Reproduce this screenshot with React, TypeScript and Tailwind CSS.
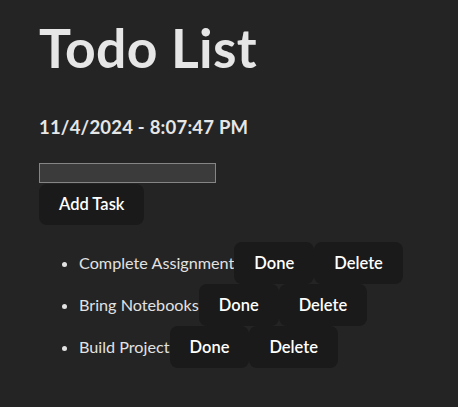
import { useState } from "react";

export default function App() {
  const [tasks] = useState(["Complete Assignment", "Bring Notebooks", "Build Project"]);

  return (
    <div className="min-h-screen bg-[#242424] text-[#e2e2e2] px-[39px] font-['Lato','Noto_Sans',sans-serif]">
      <div className="flex flex-col items-start">
        <h1 className="mt-[18px] text-[53.5px] leading-[1.1] font-bold text-[#e6e6e6] tracking-[0.3px]">Todo List</h1>
        <h3 className="mt-[38px] text-[18.5px] font-bold leading-[1.3] tracking-[0.2px] text-[#e6e6e6]">
          11/4/2024 - 8:07:47 PM
        </h3>
        <input
          type="text"
          className="mt-[24px] w-[177px] h-[20px] bg-[#3b3b3b] border border-[#858585] outline-none"
        />
        <button className="mt-[1px] h-[41px] px-[20px] rounded-lg bg-[#1a1a1a] text-white font-semibold text-[16.5px]">
          Add Task
        </button>
        <ul className="mt-[17px] list-disc pl-10">
          {tasks.map((t) => (
            <li key={t} className="h-[42px] text-[16.2px]">
              <div className="flex items-center h-full">
                <span>{t}</span>
                <button className="h-[42px] px-[20px] rounded-lg bg-[#1a1a1a] text-white font-semibold text-[16.5px]">
                  Done
                </button>
                <button className="h-[42px] px-[20px] rounded-lg bg-[#1a1a1a] text-white font-semibold text-[16.5px]">
                  Delete
                </button>
              </div>
            </li>
          ))}
        </ul>
      </div>
    </div>
  );
}
